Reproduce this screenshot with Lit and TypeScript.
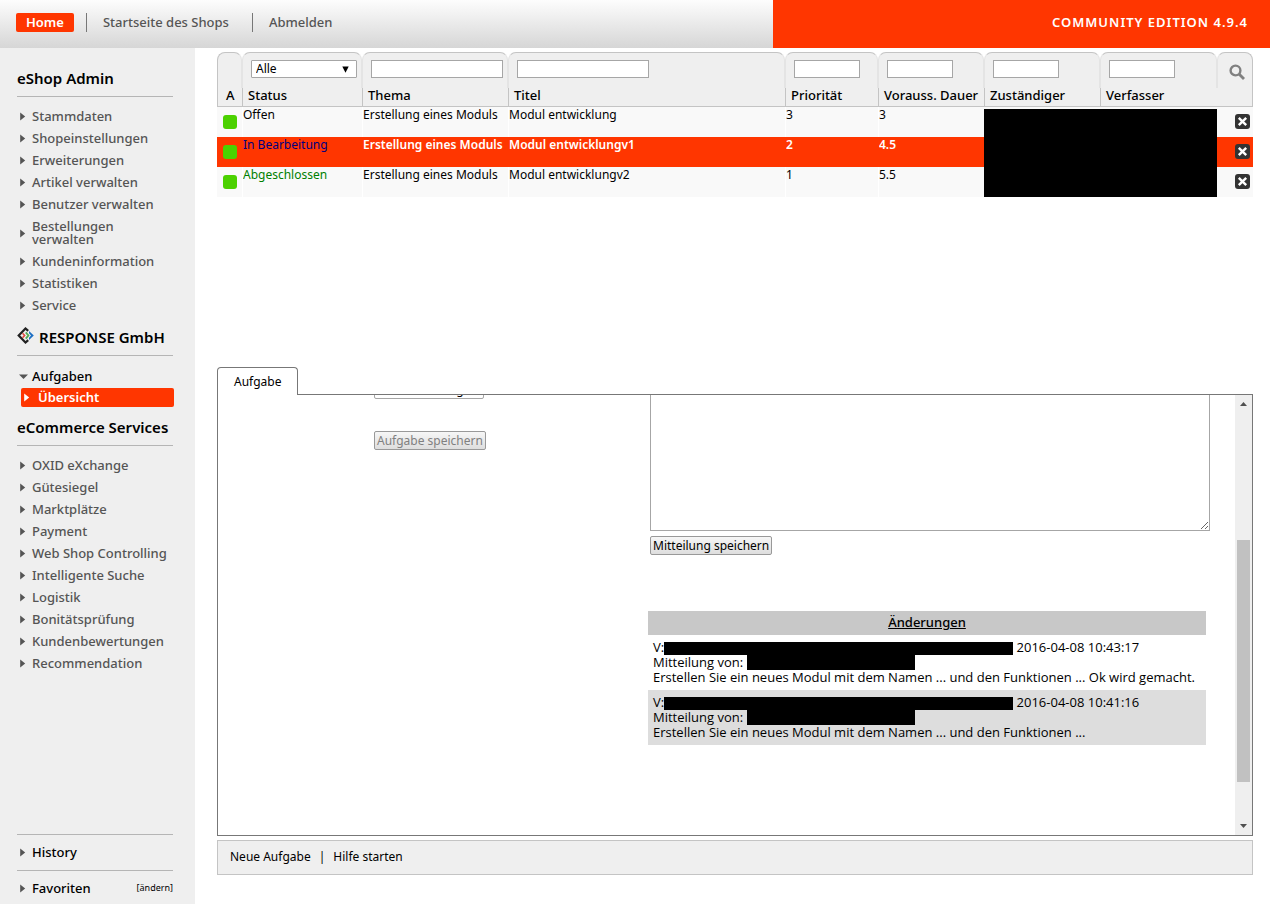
import { LitElement, html, css, svg, nothing } from "lit";
import { customElement } from "lit/decorators.js";
import { classMap } from "lit/directives/class-map.js";

const shopMenu = [
  "Stammdaten", "Shopeinstellungen", "Erweiterungen", "Artikel verwalten", "Benutzer verwalten",
  "Bestellungen verwalten", "Kundeninformation", "Statistiken", "Service",
];
const serviceMenu = [
  "OXID eXchange", "Gütesiegel", "Marktplätze", "Payment", "Web Shop Controlling",
  "Intelligente Suche", "Logistik", "Bonitätsprüfung", "Kundenbewertungen", "Recommendation",
];
const tasks = [
  { status: "Offen", kind: "open", topic: "Erstellung eines Moduls", title: "Modul entwicklung", prio: "3", effort: "3" },
  { status: "In Bearbeitung", kind: "progress", topic: "Erstellung eines Moduls", title: "Modul entwicklungv1", prio: "2", effort: "4.5" },
  { status: "Abgeschlossen", kind: "done", topic: "Erstellung eines Moduls", title: "Modul entwicklungv2", prio: "1", effort: "5.5" },
];
const changes = [
  { date: "2016-04-08 10:43:17", text: "Erstellen Sie ein neues Modul mit dem Namen ... und den Funktionen ... Ok wird gemacht." },
  { date: "2016-04-08 10:41:16", text: "Erstellen Sie ein neues Modul mit dem Namen ... und den Funktionen ..." },
];

const arrowRight = html`<svg class="arrow" width="9" height="9" viewBox="0 0 9 9" aria-hidden="true">${svg`<path d="M1.2 0.5 L6.2 4.5 L1.2 8.5 Z" fill="currentColor"/>`}</svg>`;
const arrowDown = html`<svg class="arrow" width="9" height="9" viewBox="0 0 9 9" aria-hidden="true">${svg`<path d="M0 2.5 H9 L4.5 7 Z" fill="currentColor"/>`}</svg>`;

@customElement("admin-header")
export class AdminHeader extends LitElement {
  static styles = css`
    :host { display: flex; height: 48px; font: 500 13px/19px "Noto Sans", sans-serif; }
    nav {
      flex: 1; display: flex; align-items: flex-start; padding: 13px 16px 0;
      background: linear-gradient(#fdfdfd, #d6d6d6);
    }
    a { color: #555; text-decoration: none; white-space: nowrap; }
    .home { background: #ff3600; color: #fff; font-weight: 600; border-radius: 2px; padding: 0 10px; margin-right: 12px; }
    .item { border-left: 1px solid #777; padding: 0 23px 0 16px; }
    .edition {
      width: 39.1%; box-sizing: border-box; padding: 13px 22px 0; text-align: right;
      background: #ff3600; color: #fff; font-weight: 600; letter-spacing: 1px; white-space: nowrap;
    }
  `;
  render() {
    return html`
      <nav>
        <a class="home" href="#home">Home</a>
        <a class="item" href="#shop">Startseite des Shops</a>
        <a class="item" href="#logout">Abmelden</a>
      </nav>
      <div class="edition">COMMUNITY EDITION 4.9.4</div>
    `;
  }
}

@customElement("admin-sidebar")
export class AdminSidebar extends LitElement {
  static styles = css`
    :host {
      display: flex; flex-direction: column; box-sizing: border-box; width: 195px;
      padding: 10px 22px 0 17px; background: #efefef; font: 500 13px/13px "Noto Sans", sans-serif;
    }
    h2 {
      display: flex; align-items: center; gap: 5px; margin: 10px 0 9px; padding-bottom: 8px;
      border-bottom: 1px solid #b5b5b5; font-size: 15px; line-height: 20px; font-weight: 600; color: #000;
      white-space: nowrap;
    }
    h2 svg { flex: none; margin-top: -4px; }
    ul { list-style: none; margin: 0; padding: 0; }
    .open { padding-top: 1px; }
    a {
      display: grid; grid-template-columns: 9px 1fr; column-gap: 4px; align-items: center;
      padding: 4px 0 5px 2px; color: #555; text-decoration: none;
    }
    .arrow { color: #555; }
    a.expanded { color: #000; }
    a.current {
      background: #ff3600; color: #fff; font-weight: 600; border-radius: 2px;
      margin: 0 -1px 0 4px; padding: 3px 0 3px 2px; column-gap: 6px;
    }
    .current .arrow { color: #fff; }
    .foot { margin-top: auto; }
    .row { display: flex; align-items: center; border-top: 1px solid #b5b5b5; padding: 8px 0 9px; line-height: 18px; }
    .row:last-child { padding-bottom: 7px; }
    .row a { flex: 1; padding: 0 0 0 2px; color: #000; }
    .row .edit { flex: none; display: block; padding: 0; font-size: 9px; font-weight: 400; }
  `;
  private menu(items: string[]) {
    return items.map((label) => html`<li><a href="#menu">${arrowRight}<span>${label}</span></a></li>`);
  }
  render() {
    return html`
      <h2>eShop Admin</h2>
      <ul>${this.menu(shopMenu)}</ul>
      <h2>
        <svg width="17" height="17" viewBox="0 0 17 17" fill="none" aria-hidden="true">
          <path d="M11.2 3.9 L8.5 1.5 L1.7 8.5 L8.5 15.5 L11.2 13.1" stroke="#222" stroke-width="2.2"/>
          <path d="M12 4 L16.8 8.5 L12 13 L12 10.8 L14 8.5 L12 6.2 Z" fill="#1c6fc4"/>
          <path d="M5.5 6.2 L7.6 8.5 L5.5 10.8" stroke="#e0483e" stroke-width="1.6"/>
          <path d="M8.8 5.4 L11.4 8.5 L8.8 11.6" stroke="#54ab55" stroke-width="1.8"/>
        </svg>
        RESPONSE GmbH
      </h2>
      <ul class="open">
        <li>
          <a class="expanded" href="#tasks">${arrowDown}<span>Aufgaben</span></a>
          <a class="current" href="#overview">${arrowRight}<span>Übersicht</span></a>
        </li>
      </ul>
      <h2>eCommerce Services</h2>
      <ul>${this.menu(serviceMenu)}</ul>
      <div class="foot">
        <div class="row"><a href="#history">${arrowRight}<span>History</span></a></div>
        <div class="row"><a href="#favorites">${arrowRight}<span>Favoriten</span></a><a class="edit" href="#edit">[ändern]</a></div>
      </div>
    `;
  }
}

@customElement("task-list")
export class TaskList extends LitElement {
  static styles = css`
    :host { display: block; font: 12px/15px "Noto Sans", sans-serif; color: #000; }
    table { width: 100%; table-layout: fixed; border-collapse: separate; border-spacing: 0; }
    .c-a { width: 25px; } .c-status { width: 120px; } .c-topic { width: 146px; } .c-prio { width: 93px; }
    .c-effort { width: 106px; } .c-owner { width: 116px; } .c-author { width: 117px; } .c-tool { width: 36px; }
    th, td { padding: 0; text-align: left; vertical-align: top; }
    th { font-size: 13px; font-weight: 500; border-bottom: 1px solid #c4c4c4; white-space: nowrap; }
    .cap {
      box-sizing: border-box; height: 36px; padding: 7px 8px 0; background: #efefef;
      border: 1px solid #e4e4e4; border-top-color: #c4c4c4; border-bottom: 0; border-radius: 8px 8px 0 0;
    }
    .label { height: 15px; padding: 0 0 3px 5px; background: #efefef; border-left: 1px solid #c4c4c4; }
    th:first-child .cap { border-left-color: #c4c4c4; }
    th:first-child .label { padding-left: 8px; }
    th:last-child .cap { border-right-color: #c4c4c4; padding: 11px 0 0 11px; }
    th:last-child .label { border-left: 0; border-right: 1px solid #c4c4c4; }
    input, select {
      display: block; box-sizing: border-box; height: 18px; margin: 0; padding: 0 4px; border: 1px solid #a6a6a6;
      border-radius: 0; background: #fff; color: #000; font: 12px/16px "Noto Sans", sans-serif; appearance: none;
    }
    .wide { width: 132px; }
    .short { width: 66px; }
    .pick { position: relative; display: block; width: 106px; }
    .pick select { width: 100%; border-radius: 1px; }
    .pick svg { position: absolute; right: 8px; top: 6px; pointer-events: none; }
    button { display: block; border: 0; margin: 0; padding: 0; background: none; line-height: 0; cursor: pointer; }
    tbody td { height: 30px; background: #f9f9f9; border-left: 1px solid #fff; white-space: nowrap; overflow: hidden; }
    tbody td:first-child { border-left: 0; padding-left: 6px; }
    tbody td:last-child { border-left: 0; padding-left: 18px; }
    .selected td { background: #ff3600; border-color: #ff3600; color: #fff; font-weight: 600; }
    .selected .progress { color: #000080; font-weight: 400; }
    .done { color: #008000; }
    tbody td.masked { background: #000; border: 0; border-top: 2px solid #f9f9f9; }
    .active { width: 14px; height: 14px; margin-top: 8px; border-radius: 3px; background: #4bd100; }
    .remove { margin-top: 7px; }
  `;
  private field(name: string, size: string) {
    return html`<th scope="col">
      <div class="cap"><input class=${size} id=${name} aria-label=${name} /></div>
      <div class="label"><label for=${name}>${name}</label></div>
    </th>`;
  }
  render() {
    return html`
      <table>
        <colgroup>
          <col class="c-a" /><col class="c-status" /><col class="c-topic" /><col /><col class="c-prio" />
          <col class="c-effort" /><col class="c-owner" /><col class="c-author" /><col class="c-tool" />
        </colgroup>
        <thead>
          <tr>
            <th scope="col"><div class="cap"></div><div class="label">A</div></th>
            <th scope="col">
              <div class="cap">
                <span class="pick">
                  <select id="status"><option>Alle</option><option>Offen</option><option>In Bearbeitung</option><option>Abgeschlossen</option></select>
                  <svg width="7" height="7" viewBox="0 0 7 7" aria-hidden="true"><path d="M0.3 0.5 H6.7 L3.5 6.7 Z" fill="#000"/></svg>
                </span>
              </div>
              <div class="label"><label for="status">Status</label></div>
            </th>
            ${this.field("Thema", "wide")}${this.field("Titel", "wide")}${this.field("Priorität", "short")}
            ${this.field("Vorauss. Dauer", "short")}${this.field("Zuständiger", "short")}${this.field("Verfasser", "short")}
            <th scope="col">
              <div class="cap">
                <button type="button" aria-label="Suchen">
                  <svg width="17" height="17" viewBox="0 0 17 17" fill="none" stroke="#808080">
                    <circle cx="6.5" cy="6.5" r="4.9" stroke-width="2.4"/><path d="M10 10 L15 15" stroke-width="2.8"/>
                  </svg>
                </button>
              </div>
              <div class="label"></div>
            </th>
          </tr>
        </thead>
        <tbody>
          ${tasks.map((t, i) => html`
            <tr class=${classMap({ selected: t.kind === "progress" })}>
              <td><div class="active"></div></td>
              <td class=${t.kind}>${t.status}</td>
              <td>${t.topic}</td>
              <td>${t.title}</td>
              <td>${t.prio}</td>
              <td>${t.effort}</td>
              ${i === 0 ? html`<td class="masked" rowspan="3" colspan="2"></td>` : nothing}
              <td>
                <button class="remove" type="button" aria-label="Löschen">
                  <svg width="15" height="15" viewBox="0 0 15 15">
                    <rect width="15" height="15" rx="3" fill="#333"/>
                    <path d="M3.8 3.8 L11.2 11.2 M11.2 3.8 L3.8 11.2" stroke="#fff" stroke-width="2.4"/>
                  </svg>
                </button>
              </td>
            </tr>`)}
        </tbody>
      </table>
    `;
  }
}

@customElement("task-editor")
export class TaskEditor extends LitElement {
  static styles = css`
    :host { display: flex; flex-direction: column; min-height: 0; font: 12px/15px "Noto Sans", sans-serif; color: #000; }
    .tab {
      position: relative; z-index: 1; align-self: flex-start; margin-bottom: -1px; padding: 6px 16px;
      border: 1px solid #777; border-bottom: 0; border-radius: 4px 4px 0 0; background: #fff;
      color: #000; text-decoration: none;
    }
    .panel { flex: 1; min-height: 0; display: flex; border: 1px solid #777; }
    .body {
      flex: 1; min-width: 0; overflow: hidden; display: grid; grid-template-columns: 430px 1fr;
      align-items: start; padding-right: 25px;
    }
    .left { padding-left: 156px; }
    select {
      display: block; box-sizing: border-box; width: 110px; height: 19px; margin: -15px 0 32px; padding: 0 4px;
      border: 1px solid #a6a6a6; border-radius: 2px; background: #fff; color: #000; font: inherit; appearance: none;
    }
    button {
      display: block; height: 19px; margin: 0; padding: 0 2px; border: 1px solid #999; border-radius: 2px;
      background: linear-gradient(#f6f6f6, #dedede); color: #000; font: inherit; white-space: nowrap;
    }
    button:disabled { color: #808080; }
    .message { padding-left: 2px; }
    textarea {
      display: block; box-sizing: border-box; width: 100%; height: 176px; margin: -40px 0 5px;
      border: 1px solid #a6a6a6; background: #fff; resize: both; font: inherit;
    }
    .log { margin: 56px 4px 0 0; }
    h3 {
      margin: 0; padding: 4px 0 5px; background: #c8c8c8; text-align: center; text-decoration: underline;
      font: 500 13px/15px "Noto Sans", sans-serif;
    }
    .entry { margin: 0; padding: 5px; font: 13px/15px "Open Sans", sans-serif; }
    .entry:nth-child(odd) { background: #ddd; }
    .mask { display: inline-block; vertical-align: top; background: #000; }
    .long { width: 349px; height: 13px; margin-top: 2px; }
    .name { width: 168px; height: 15px; }
    .bar {
      box-sizing: border-box; width: 17px; padding: 7px 2px; background: #efefef;
      display: grid; grid-template-rows: 5px 133fr 241fr 42fr 4px; justify-items: center;
    }
    .thumb { grid-row: 3; width: 100%; background: #c1c1c1; }
    .down { grid-row: 5; }
  `;
  render() {
    return html`
      <a class="tab" href="#task">Aufgabe</a>
      <div class="panel">
        <div class="body">
          <div class="left">
            <select aria-label="Status"><option>In Bearbeitung</option></select>
            <button type="button" disabled>Aufgabe speichern</button>
          </div>
          <div class="right">
            <div class="message">
              <textarea aria-label="Mitteilung"></textarea>
              <button type="button">Mitteilung speichern</button>
            </div>
            <div class="log">
              <h3>Änderungen</h3>
              ${changes.map((c) => html`<p class="entry">V:<span class="mask long"></span> ${c.date}<br />Mitteilung von: <span class="mask name"></span><br />${c.text}</p>`)}
            </div>
          </div>
        </div>
        <div class="bar" aria-hidden="true">
          <svg width="7" height="4" viewBox="0 0 7 4"><path d="M0 4 L3.5 0 L7 4 Z" fill="#505050"/></svg>
          <div class="thumb"></div>
          <svg class="down" width="7" height="4" viewBox="0 0 7 4"><path d="M0 0 L3.5 4 L7 0 Z" fill="#505050"/></svg>
        </div>
      </div>
    `;
  }
}

@customElement("app-root")
export class AppRoot extends LitElement {
  static styles = css`
    :host { display: grid; grid-template: auto minmax(0, 1fr) / auto minmax(0, 1fr); height: 100vh; background: #fff; }
    admin-header { grid-column: 1 / -1; }
    main { display: flex; flex-direction: column; padding: 4px 17px 29px 22px; }
    task-list { flex: 0 0 315px; }
    task-editor { flex: 1; }
    footer {
      margin-top: 4px; padding: 8px 12px 10px; border: 1px solid #c4c4c4; background: #efefef;
      font: 12px/15px "Noto Sans", sans-serif; color: #000; display: flex; gap: 8px;
    }
    footer a { color: inherit; text-decoration: none; }
  `;
  render() {
    return html`
      <admin-header></admin-header>
      <admin-sidebar></admin-sidebar>
      <main>
        <task-list></task-list>
        <task-editor></task-editor>
        <footer><a href="#new">Neue Aufgabe</a><span>|</span><a href="#help">Hilfe starten</a></footer>
      </main>
    `;
  }
}
